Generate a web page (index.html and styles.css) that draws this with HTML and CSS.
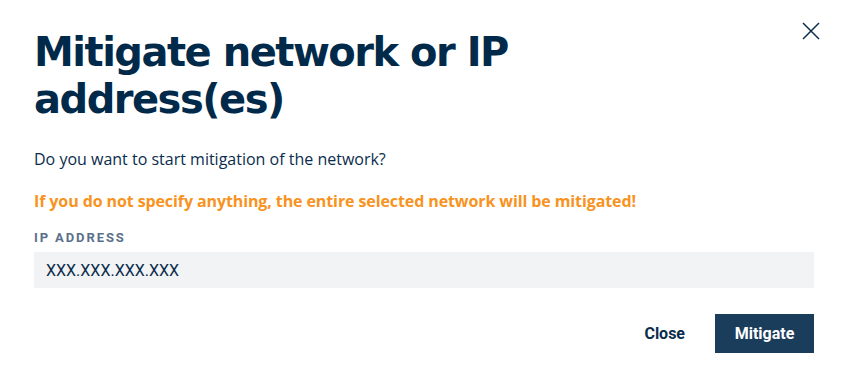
FILE: index.html
```html
<!DOCTYPE html>
<html lang="en">
<head>
    <meta charset="UTF-8">
    <meta name="viewport" content="width=device-width, initial-scale=1.0">
    <title>Mitigate network or IP address(es)</title>
    <link rel="stylesheet" href="styles.css">
</head>
<body>
    <div class="modal">
        <button class="close-x" type="button" aria-label="Close">
            <svg width="18" height="18" viewBox="0 0 18 18">
                <path d="M1 1 L17 17 M17 1 L1 17" stroke="#0b2d4d" stroke-width="1.5" fill="none"/>
            </svg>
        </button>
        <h1 class="title">Mitigate network or IP address(es)</h1>
        <p class="question">Do you want to start mitigation of the network?</p>
        <p class="warning">If you do not specify anything, the entire selected network will be mitigated!</p>
        <form class="form">
            <label class="label" for="ip">IP ADDRESS</label>
            <input class="input" id="ip" type="text" placeholder="XXX.XXX.XXX.XXX">
            <div class="actions">
                <button class="btn-link" type="button">Close</button>
                <button class="btn-primary" type="submit">Mitigate</button>
            </div>
        </form>
    </div>
</body>
</html>
```

FILE: styles.css
```css
body {
    margin: 0;
    background-color: #fff;
    font-family: "Open Sans", Roboto, sans-serif;
    color: #0b2d4d;
}

.modal {
    position: relative;
    padding: 29px 34px 30px 34px;
}

.close-x {
    position: absolute;
    top: 22px;
    right: 28px;
    border: none;
    background: none;
    padding: 0;
    cursor: pointer;
}

.title {
    margin: 0;
    width: 500px;
    font: 700 40px/47px "DejaVu Sans", sans-serif;
    color: #012a4a;
    letter-spacing: -1.5px;
}

.question {
    margin: 26px 0 0 0;
    font-size: 16px;
    line-height: 20px;
    color: #0b2d4d;
}

.warning {
    margin: 22px 0 0 0;
    font-size: 16px;
    line-height: 20px;
    font-weight: 700;
    letter-spacing: -0.1px;
    color: #f7931e;
}

.form {
    display: flex;
    flex-direction: column;
    margin-top: 19px;
}

.label {
    font: 700 13px/16px Roboto, sans-serif;
    letter-spacing: 1.9px;
    color: #5a7089;
}

.input {
    margin-top: 6px;
    height: 36px;
    padding: 0 12px;
    border: none;
    background-color: #f2f3f5;
    font: 16px Roboto, sans-serif;
    color: #0b2d4d;
}

.input::placeholder {
    color: #0b2d4d;
}

.actions {
    display: flex;
    justify-content: flex-end;
    align-items: center;
    gap: 30px;
    margin-top: 26px;
}

.btn-link {
    border: none;
    background: none;
    padding: 0;
    font: 700 16px Roboto, sans-serif;
    color: #0b2d4d;
    cursor: pointer;
}

.btn-primary {
    width: 99px;
    height: 39px;
    border: none;
    background-color: #1b3d5c;
    color: #fff;
    font: 700 16px Roboto, sans-serif;
    cursor: pointer;
}
```
